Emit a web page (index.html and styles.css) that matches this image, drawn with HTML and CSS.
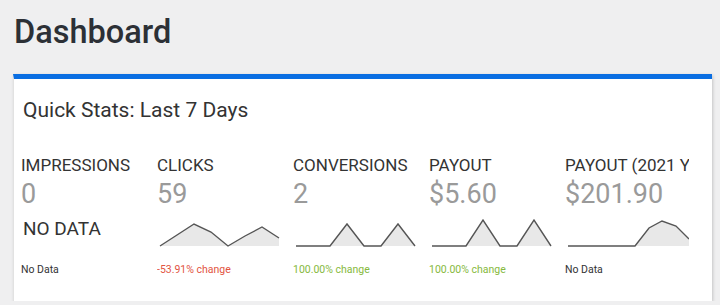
FILE: index.html
```html
<!DOCTYPE html>
<html lang="en">
<head>
    <meta charset="UTF-8">
    <meta name="viewport" content="width=device-width, initial-scale=1.0">
    <title>Dashboard</title>
    <link rel="stylesheet" href="styles.css">
</head>
<body>
    <h1 class="page-title">Dashboard</h1>
    <div class="card">
        <div class="card-title">Quick Stats: Last 7 Days</div>
        <div class="stats">
            <div class="stat">
                <div class="stat-label">Impressions</div>
                <div class="stat-value">0</div>
                <div class="stat-chart"><div class="no-data">NO DATA</div></div>
                <div class="stat-change">No Data</div>
            </div>
            <div class="stat">
                <div class="stat-label">Clicks</div>
                <div class="stat-value">59</div>
                <div class="stat-chart">
                    <svg class="spark" viewBox="0 0 124 30">
                        <polygon class="spark-fill" points="3,28 20,17 37,6 54,14 71,28 88,18 105,9 122,20 122,28"/>
                        <polyline class="spark-line" points="3,28 20,17 37,6 54,14 71,28 88,18 105,9 122,20"/>
                    </svg>
                </div>
                <div class="stat-change down">-53.91% change</div>
            </div>
            <div class="stat">
                <div class="stat-label">Conversions</div>
                <div class="stat-value">2</div>
                <div class="stat-chart">
                    <svg class="spark" viewBox="0 0 124 30">
                        <polygon class="spark-fill" points="3,28 20,28 37,28 54,6 71,28 88,28 105,6 122,28"/>
                        <polyline class="spark-line" points="3,28 20,28 37,28 54,6 71,28 88,28 105,6 122,28"/>
                    </svg>
                </div>
                <div class="stat-change up">100.00% change</div>
            </div>
            <div class="stat">
                <div class="stat-label">Payout</div>
                <div class="stat-value">$5.60</div>
                <div class="stat-chart">
                    <svg class="spark" viewBox="0 0 124 30">
                        <polygon class="spark-fill" points="3,28 20,28 37,28 54,2 71,28 88,28 105,2 122,28"/>
                        <polyline class="spark-line" points="3,28 20,28 37,28 54,2 71,28 88,28 105,2 122,28"/>
                    </svg>
                </div>
                <div class="stat-change up">100.00% change</div>
            </div>
            <div class="stat">
                <div class="stat-label">Payout (2021 YTD)</div>
                <div class="stat-value">$201.90</div>
                <div class="stat-chart">
                    <svg class="spark" viewBox="0 0 124 30">
                        <polygon class="spark-fill" points="3,28 70,28 84,10 97,3 111,8 124,21 124,28"/>
                        <polyline class="spark-line" points="3,28 70,28 84,10 97,3 111,8 124,21"/>
                    </svg>
                </div>
                <div class="stat-change">No Data</div>
            </div>
        </div>
    </div>
</body>
</html>
```

FILE: styles.css
```css
* {
    margin: 0;
    padding: 0;
    box-sizing: border-box;
}

body {
    background: #efeff0;
    font-family: Roboto, "Liberation Sans", sans-serif;
    color: #333;
    padding: 13px 8px 0 13px;
}

.page-title {
    font-size: 32.5px;
    line-height: 38px;
    font-weight: 500;
    color: #2c3036;
    margin-left: 1px;
    margin-bottom: 23px;
}

.card {
    background: #fff;
    border-top: 5px solid #0a6ee2;
    border-left: 1px solid #e2e2e2;
    box-shadow: 1px 1px 3px rgba(0, 0, 0, 0.18);
    padding: 19px 7px 25px;
}

.card-title {
    font-size: 21px;
    line-height: 24px;
    color: #333;
    padding-left: 2px;
    margin-bottom: 33px;
}

.stats {
    display: flex;
    gap: 12px;
}

.stat {
    width: 124px;
    flex: none;
    overflow: hidden;
    white-space: nowrap;
}

.stat-label {
    font-size: 17px;
    line-height: 20px;
    text-transform: uppercase;
    color: #333;
}

.stat-value {
    font-size: 27px;
    line-height: 30px;
    color: #9a9a9a;
    margin-top: 4px;
}

.stat-chart {
    height: 32px;
    margin-top: 9px;
}

.no-data {
    font-size: 19px;
    line-height: 22px;
    padding-left: 2px;
    color: #333;
}

.spark {
    display: block;
    width: 124px;
    height: 30px;
    margin-top: 2px;
}

.spark-fill {
    fill: #e8e8e8;
}

.spark-line {
    fill: none;
    stroke: #555;
    stroke-width: 1.4;
}

.stat-change {
    font-size: 10.5px;
    line-height: 13px;
    margin-top: 13px;
    color: #333;
}

.stat-change.down {
    color: #e2543f;
}

.stat-change.up {
    color: #86b940;
}
```
